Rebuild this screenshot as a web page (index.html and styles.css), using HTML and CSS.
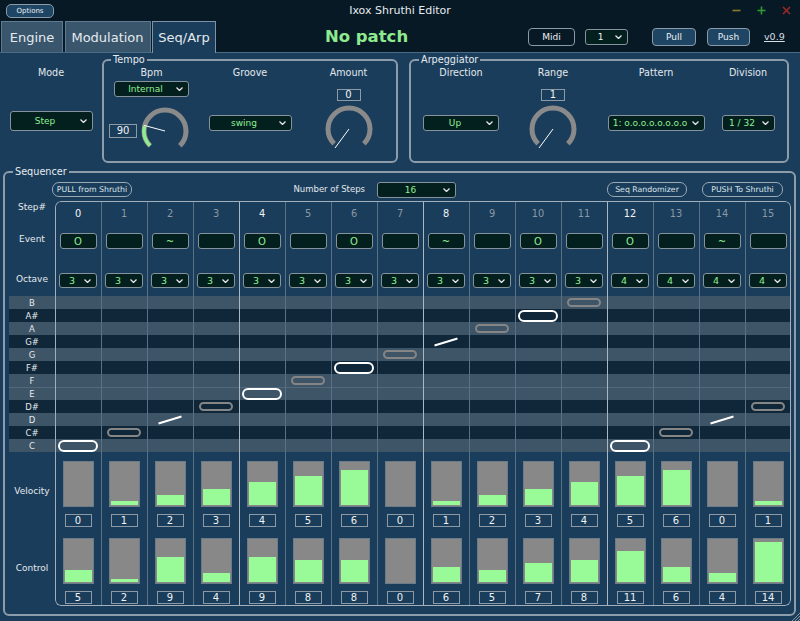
FILE: index.html
```html
<!DOCTYPE html>
<html>
<head>
<meta charset="utf-8">
<title>Ixox Shruthi Editor</title>
<link rel="stylesheet" href="styles.css">
</head>
<body>
<div class="titlebar">
  <div class="btn btn-blue options">Options</div>
  <div class="title">Ixox Shruthi Editor</div>
  <div class="winctl">
    <svg class="wc" viewBox="0 0 9 9"><line x1="0.5" y1="4.5" x2="8.5" y2="4.5" stroke="#8b7c2a" stroke-width="1.6"/></svg>
    <svg class="wc" viewBox="0 0 9 9"><line x1="0.5" y1="4.5" x2="8.5" y2="4.5" stroke="#2f9a2f" stroke-width="1.6"/><line x1="4.5" y1="0.5" x2="4.5" y2="8.5" stroke="#2f9a2f" stroke-width="1.6"/></svg>
    <svg class="wc" viewBox="0 0 9 9"><line x1="1" y1="1" x2="8" y2="8" stroke="#a22a2a" stroke-width="1.4"/><line x1="8" y1="1" x2="1" y2="8" stroke="#a22a2a" stroke-width="1.4"/></svg>
  </div>
</div>

<div class="tabbar">
  <div class="tab t-engine">Engine</div>
  <div class="tab t-mod">Modulation</div>
  <div class="tab t-seq active">Seq/Arp</div>
  <div class="nopatch">No patch</div>
  <div class="btn btn-dark midi">Midi</div>
  <div class="dd dd-white chan"><span>1</span><svg class="chev" viewBox="0 0 7 4"><polyline points="0.5,0.5 3.5,3.5 6.5,0.5"/></svg></div>
  <div class="btn btn-blue pull">Pull</div>
  <div class="btn btn-blue push">Push</div>
  <div class="ver">v0.9</div>
</div>

<div class="main">
  <div class="top">
    <div class="mode">
      <div class="lbl">Mode</div>
      <div class="dd w-step"><span>Step</span><svg class="chev" viewBox="0 0 7 4"><polyline points="0.5,0.5 3.5,3.5 6.5,0.5"/></svg></div>
    </div>

    <fieldset class="group tempo">
      <legend>Tempo</legend>
      <div class="gcols">
        <div class="col c-bpm">
          <div class="lbl">Bpm</div>
          <div class="dd w-internal"><span>Internal</span><svg class="chev" viewBox="0 0 7 4"><polyline points="0.5,0.5 3.5,3.5 6.5,0.5"/></svg></div>
          <div class="knobrow">
            <div class="vbox v-bpm">90</div>
            <svg class="knob" viewBox="0 0 48 48"><path d="M9.15 38.85 A21 21 0 1 1 38.85 38.85" class="ring"/><path d="M9.15 38.85 A21 21 0 0 1 3.54 19.28" class="ring-on"/><line x1="24" y1="24" x2="2.75" y2="18.3" class="needle"/></svg>
          </div>
        </div>
        <div class="col c-groove">
          <div class="lbl">Groove</div>
          <div class="dd w-swing low"><span>swing</span><svg class="chev" viewBox="0 0 7 4"><polyline points="0.5,0.5 3.5,3.5 6.5,0.5"/></svg></div>
        </div>
        <div class="col c-amount">
          <div class="lbl">Amount</div>
          <div class="vbox v-small">0</div>
          <svg class="knob k-small" viewBox="0 0 48 48"><path d="M9.15 38.85 A21 21 0 1 1 38.85 38.85" class="ring"/><line x1="24" y1="24" x2="10" y2="43" class="needle"/></svg>
        </div>
      </div>
    </fieldset>

    <fieldset class="group arp">
      <legend>Arpeggiator</legend>
      <div class="gcols">
        <div class="col c-dir">
          <div class="lbl">Direction</div>
          <div class="dd w-up low"><span>Up</span><svg class="chev" viewBox="0 0 7 4"><polyline points="0.5,0.5 3.5,3.5 6.5,0.5"/></svg></div>
        </div>
        <div class="col c-range">
          <div class="lbl">Range</div>
          <div class="vbox v-small">1</div>
          <svg class="knob k-small" viewBox="0 0 48 48"><path d="M9.15 38.85 A21 21 0 1 1 38.85 38.85" class="ring"/><line x1="24" y1="24" x2="10" y2="43" class="needle"/></svg>
        </div>
        <div class="col c-pat">
          <div class="lbl">Pattern</div>
          <div class="dd w-pat low"><span>1: o.o.o.o.o.o.o.o</span><svg class="chev" viewBox="0 0 7 4"><polyline points="0.5,0.5 3.5,3.5 6.5,0.5"/></svg></div>
        </div>
        <div class="col c-div">
          <div class="lbl">Division</div>
          <div class="dd w-div low"><span>1 / 32</span><svg class="chev" viewBox="0 0 7 4"><polyline points="0.5,0.5 3.5,3.5 6.5,0.5"/></svg></div>
        </div>
      </div>
    </fieldset>
  </div>

  <fieldset class="group seq">
    <legend>Sequencer</legend>
    <div class="seqhead">
      <div class="btn btn-pill b-pull">PULL from Shruthi</div>
      <div class="nsteps">Number of Steps</div>
      <div class="dd w-steps"><span>16</span><svg class="chev" viewBox="0 0 7 4"><polyline points="0.5,0.5 3.5,3.5 6.5,0.5"/></svg></div>
      <div class="btn btn-pill b-rand">Seq Randomizer</div>
      <div class="btn btn-pill b-push">PUSH To Shruthi</div>
    </div>

    <div class="seqgrid">
      <div class="labels">
        <div class="lab lab-step">Step#</div>
        <div class="lab lab-ev">Event</div>
        <div class="lab lab-oct">Octave</div>
        <div class="lab lab-p">B</div>
        <div class="lab lab-p">A#</div>
        <div class="lab lab-p">A</div>
        <div class="lab lab-p">G#</div>
        <div class="lab lab-p">G</div>
        <div class="lab lab-p">F#</div>
        <div class="lab lab-p">F</div>
        <div class="lab lab-p">E</div>
        <div class="lab lab-p">D#</div>
        <div class="lab lab-p">D</div>
        <div class="lab lab-p">C#</div>
        <div class="lab lab-p">C</div>
        <div class="lab">Velocity</div>
        <div class="lab">Control</div>
      </div>

      <div class="steps">
        <div class="num hi">0</div><div class="num">1</div><div class="num">2</div><div class="num">3</div>
        <div class="num hi">4</div><div class="num">5</div><div class="num">6</div><div class="num">7</div>
        <div class="num hi">8</div><div class="num">9</div><div class="num">10</div><div class="num">11</div>
        <div class="num hi">12</div><div class="num">13</div><div class="num">14</div><div class="num">15</div>

        <div class="evc"><div class="ev">O</div></div>
        <div class="evc"><div class="ev"></div></div>
        <div class="evc"><div class="ev">~</div></div>
        <div class="evc"><div class="ev"></div></div>
        <div class="evc"><div class="ev">O</div></div>
        <div class="evc"><div class="ev"></div></div>
        <div class="evc"><div class="ev">O</div></div>
        <div class="evc"><div class="ev"></div></div>
        <div class="evc"><div class="ev">~</div></div>
        <div class="evc"><div class="ev"></div></div>
        <div class="evc"><div class="ev">O</div></div>
        <div class="evc"><div class="ev"></div></div>
        <div class="evc"><div class="ev">O</div></div>
        <div class="evc"><div class="ev"></div></div>
        <div class="evc"><div class="ev">~</div></div>
        <div class="evc"><div class="ev"></div></div>

        <div class="octc"><div class="dd oct"><span>3</span><svg class="chev" viewBox="0 0 7 4"><polyline points="0.5,0.5 3.5,3.5 6.5,0.5"/></svg></div></div>
        <div class="octc"><div class="dd oct"><span>3</span><svg class="chev" viewBox="0 0 7 4"><polyline points="0.5,0.5 3.5,3.5 6.5,0.5"/></svg></div></div>
        <div class="octc"><div class="dd oct"><span>3</span><svg class="chev" viewBox="0 0 7 4"><polyline points="0.5,0.5 3.5,3.5 6.5,0.5"/></svg></div></div>
        <div class="octc"><div class="dd oct"><span>3</span><svg class="chev" viewBox="0 0 7 4"><polyline points="0.5,0.5 3.5,3.5 6.5,0.5"/></svg></div></div>
        <div class="octc"><div class="dd oct"><span>3</span><svg class="chev" viewBox="0 0 7 4"><polyline points="0.5,0.5 3.5,3.5 6.5,0.5"/></svg></div></div>
        <div class="octc"><div class="dd oct"><span>3</span><svg class="chev" viewBox="0 0 7 4"><polyline points="0.5,0.5 3.5,3.5 6.5,0.5"/></svg></div></div>
        <div class="octc"><div class="dd oct"><span>3</span><svg class="chev" viewBox="0 0 7 4"><polyline points="0.5,0.5 3.5,3.5 6.5,0.5"/></svg></div></div>
        <div class="octc"><div class="dd oct"><span>3</span><svg class="chev" viewBox="0 0 7 4"><polyline points="0.5,0.5 3.5,3.5 6.5,0.5"/></svg></div></div>
        <div class="octc"><div class="dd oct"><span>3</span><svg class="chev" viewBox="0 0 7 4"><polyline points="0.5,0.5 3.5,3.5 6.5,0.5"/></svg></div></div>
        <div class="octc"><div class="dd oct"><span>3</span><svg class="chev" viewBox="0 0 7 4"><polyline points="0.5,0.5 3.5,3.5 6.5,0.5"/></svg></div></div>
        <div class="octc"><div class="dd oct"><span>3</span><svg class="chev" viewBox="0 0 7 4"><polyline points="0.5,0.5 3.5,3.5 6.5,0.5"/></svg></div></div>
        <div class="octc"><div class="dd oct"><span>3</span><svg class="chev" viewBox="0 0 7 4"><polyline points="0.5,0.5 3.5,3.5 6.5,0.5"/></svg></div></div>
        <div class="octc"><div class="dd oct"><span>4</span><svg class="chev" viewBox="0 0 7 4"><polyline points="0.5,0.5 3.5,3.5 6.5,0.5"/></svg></div></div>
        <div class="octc"><div class="dd oct"><span>4</span><svg class="chev" viewBox="0 0 7 4"><polyline points="0.5,0.5 3.5,3.5 6.5,0.5"/></svg></div></div>
        <div class="octc"><div class="dd oct"><span>4</span><svg class="chev" viewBox="0 0 7 4"><polyline points="0.5,0.5 3.5,3.5 6.5,0.5"/></svg></div></div>
        <div class="octc"><div class="dd oct"><span>4</span><svg class="chev" viewBox="0 0 7 4"><polyline points="0.5,0.5 3.5,3.5 6.5,0.5"/></svg></div></div>

        <div class="pn" style="grid-area:15/1"><div class="on"></div></div>
        <div class="pn" style="grid-area:14/2"><div class="off"></div></div>
        <div class="pn" style="grid-area:13/3"><div class="tie"></div></div>
        <div class="pn" style="grid-area:12/4"><div class="off"></div></div>
        <div class="pn" style="grid-area:11/5"><div class="on"></div></div>
        <div class="pn" style="grid-area:10/6"><div class="off"></div></div>
        <div class="pn" style="grid-area:9/7"><div class="on"></div></div>
        <div class="pn" style="grid-area:8/8"><div class="off"></div></div>
        <div class="pn" style="grid-area:7/9"><div class="tie"></div></div>
        <div class="pn" style="grid-area:6/10"><div class="off"></div></div>
        <div class="pn" style="grid-area:5/11"><div class="on"></div></div>
        <div class="pn" style="grid-area:4/12"><div class="off"></div></div>
        <div class="pn" style="grid-area:15/13"><div class="on"></div></div>
        <div class="pn" style="grid-area:14/14"><div class="off"></div></div>
        <div class="pn" style="grid-area:13/15"><div class="tie"></div></div>
        <div class="pn" style="grid-area:12/16"><div class="off"></div></div>

        <div class="slot vel"><div class="bar"><div class="fill" style="height:0px"></div></div><div class="vbox val">0</div></div>
        <div class="slot vel"><div class="bar"><div class="fill" style="height:4px"></div></div><div class="vbox val">1</div></div>
        <div class="slot vel"><div class="bar"><div class="fill" style="height:10px"></div></div><div class="vbox val">2</div></div>
        <div class="slot vel"><div class="bar"><div class="fill" style="height:16px"></div></div><div class="vbox val">3</div></div>
        <div class="slot vel"><div class="bar"><div class="fill" style="height:23px"></div></div><div class="vbox val">4</div></div>
        <div class="slot vel"><div class="bar"><div class="fill" style="height:29px"></div></div><div class="vbox val">5</div></div>
        <div class="slot vel"><div class="bar"><div class="fill" style="height:35px"></div></div><div class="vbox val">6</div></div>
        <div class="slot vel"><div class="bar"><div class="fill" style="height:0px"></div></div><div class="vbox val">0</div></div>
        <div class="slot vel"><div class="bar"><div class="fill" style="height:4px"></div></div><div class="vbox val">1</div></div>
        <div class="slot vel"><div class="bar"><div class="fill" style="height:10px"></div></div><div class="vbox val">2</div></div>
        <div class="slot vel"><div class="bar"><div class="fill" style="height:16px"></div></div><div class="vbox val">3</div></div>
        <div class="slot vel"><div class="bar"><div class="fill" style="height:23px"></div></div><div class="vbox val">4</div></div>
        <div class="slot vel"><div class="bar"><div class="fill" style="height:29px"></div></div><div class="vbox val">5</div></div>
        <div class="slot vel"><div class="bar"><div class="fill" style="height:35px"></div></div><div class="vbox val">6</div></div>
        <div class="slot vel"><div class="bar"><div class="fill" style="height:0px"></div></div><div class="vbox val">0</div></div>
        <div class="slot vel"><div class="bar"><div class="fill" style="height:4px"></div></div><div class="vbox val">1</div></div>

        <div class="slot ctl"><div class="bar"><div class="fill" style="height:12.4px"></div></div><div class="vbox val">5</div></div>
        <div class="slot ctl"><div class="bar"><div class="fill" style="height:3.1px"></div></div><div class="vbox val">2</div></div>
        <div class="slot ctl"><div class="bar"><div class="fill" style="height:24.8px"></div></div><div class="vbox val">9</div></div>
        <div class="slot ctl"><div class="bar"><div class="fill" style="height:9.3px"></div></div><div class="vbox val">4</div></div>
        <div class="slot ctl"><div class="bar"><div class="fill" style="height:24.8px"></div></div><div class="vbox val">9</div></div>
        <div class="slot ctl"><div class="bar"><div class="fill" style="height:21.7px"></div></div><div class="vbox val">8</div></div>
        <div class="slot ctl"><div class="bar"><div class="fill" style="height:21.7px"></div></div><div class="vbox val">8</div></div>
        <div class="slot ctl"><div class="bar"><div class="fill" style="height:0px"></div></div><div class="vbox val">0</div></div>
        <div class="slot ctl"><div class="bar"><div class="fill" style="height:15.5px"></div></div><div class="vbox val">6</div></div>
        <div class="slot ctl"><div class="bar"><div class="fill" style="height:12.4px"></div></div><div class="vbox val">5</div></div>
        <div class="slot ctl"><div class="bar"><div class="fill" style="height:18.6px"></div></div><div class="vbox val">7</div></div>
        <div class="slot ctl"><div class="bar"><div class="fill" style="height:21.7px"></div></div><div class="vbox val">8</div></div>
        <div class="slot ctl"><div class="bar"><div class="fill" style="height:31px"></div></div><div class="vbox val">11</div></div>
        <div class="slot ctl"><div class="bar"><div class="fill" style="height:15.5px"></div></div><div class="vbox val">6</div></div>
        <div class="slot ctl"><div class="bar"><div class="fill" style="height:9.3px"></div></div><div class="vbox val">4</div></div>
        <div class="slot ctl"><div class="bar"><div class="fill" style="height:40.3px"></div></div><div class="vbox val">14</div></div>
      </div>
    </div>
  </fieldset>
</div>

<svg class="grip" viewBox="0 0 10 10"><line x1="2" y1="10" x2="10" y2="2"/><line x1="5" y1="10" x2="10" y2="5"/><line x1="8" y1="10" x2="10" y2="8"/></svg>
</body>
</html>
```

FILE: styles.css
```css
* { box-sizing: border-box; }
html, body { margin: 0; padding: 0; }
body {
  width: 800px;
  height: 621px;
  overflow: hidden;
  position: relative;
  background: #081926;
  font-family: "DejaVu Sans", Verdana, sans-serif;
  color: #e2e8ec;
}

/* ---------- title bar ---------- */
.titlebar {
  height: 21px;
  display: grid;
  grid-template-columns: 1fr auto 1fr;
  align-items: center;
}
.title { font-size: 11px; color: #e6ebef; }
.winctl {
  justify-self: end;
  display: flex;
  align-items: center;
  gap: 16px;
  margin-right: 9px;
}
.wc { width: 9px; height: 9px; display: block; }

.btn {
  display: flex;
  align-items: center;
  justify-content: center;
  border: 1px solid #8a9aa8;
  border-radius: 4px;
  color: #e8eef2;
  white-space: nowrap;
}
.btn-blue { background: #1f4564; }
.btn-dark { background: #081926; }
.btn-pill { background: transparent; border-color: #9aa8b4; border-radius: 7px; font-size: 7.8px; height: 15px; margin-top: 4px; color: #dde4ea; }

.options {
  justify-self: start;
  margin-left: 6px;
  width: 48px;
  height: 14px;
  font-size: 7px;
  border-radius: 5px;
}

/* ---------- tab bar ---------- */
.tabbar {
  height: 31px;
  display: flex;
  align-items: stretch;
  padding-left: 1px;
}
.tab {
  font-size: 13px;
  display: flex;
  align-items: center;
  justify-content: center;
  background: #3a566c;
  border: 1px solid #5f7b92;
  border-bottom: none;
  color: #e4eaee;
  margin-right: 1.5px;
}
.t-engine { width: 62px; }
.t-mod { width: 86px; }
.t-seq { width: 64px; }
.tab.active {
  background: #1a3d5b;
  border-color: #7f93a4;
  position: relative;
  z-index: 1;
  margin-bottom: -1px;
}
.nopatch {
  width: 200px;
  margin-left: 49px;
  align-self: center;
  text-align: center;
  font-weight: bold;
  font-size: 16.5px;
  color: #8fe98f;
}
.midi, .chan, .pull, .push { align-self: center; height: 18px; font-size: 9px; }
.midi { margin-left: 61.5px; width: 47px; }
.chan { margin-left: 10px; width: 43px; }
.pull { margin-left: 24px; width: 44px; }
.push { margin-left: 11px; width: 43px; }
.ver {
  align-self: center;
  margin-left: 14px;
  font-size: 9.5px;
  text-decoration: underline;
  color: #d8dee4;
}

/* ---------- dropdowns ---------- */
.dd {
  display: flex;
  align-items: center;
  background: #03201f;
  border: 1px solid #87939c;
  border-radius: 3px;
  color: #90ee90;
  font-size: 9px;
  padding-right: 5px;
  height: 16px;
  white-space: nowrap;
}
.dd span { flex: 1; text-align: center; }
.dd-white { color: #f0f0f0; }
.chev {
  width: 7px;
  height: 4px;
  display: block;
  fill: none;
  stroke: #e6e6e6;
  stroke-width: 1.3;
}
.w-step { width: 83px; height: 20px; margin-top: 32px; }
.w-internal { width: 75px; margin-top: 2px; }
.w-swing { width: 83px; }
.w-up { width: 76px; }
.w-pat { width: 97px; }
.w-div { width: 53px; }
.w-steps { width: 79px; margin-left: 12px; margin-top: 4px; }
.low { margin-top: 36px; }

/* ---------- main panel ---------- */
.main {
  height: 569px;
  background: #1a3d5b;
  border-top: 1px solid #4a6a86;
}
.top {
  display: flex;
  align-items: flex-start;
  padding-top: 1px;
}
.lbl {
  font-size: 9.6px;
  line-height: 12px;
  margin-top: 1px;
  color: #e2e8ec;
  white-space: nowrap;
}
.mode {
  width: 102px;
  display: flex;
  flex-direction: column;
  align-items: center;
}
.mode .lbl { margin-top: 13px; }

.group {
  border: 2px solid #8d9caa;
  border-radius: 6px;
  margin: 0;
  padding: 0;
  min-width: 0;
}
.group legend {
  font-size: 9.7px;
  line-height: 12px;
  padding: 0 2px;
  color: #e6ebef;
}
.tempo { width: 296px; }
.tempo legend { margin-left: 7px; }
.arp { width: 380px; margin-left: 11px; }
.arp legend { margin-left: 8px; }

.gcols { display: flex; height: 95px; }
.col { display: flex; flex-direction: column; align-items: center; }
.c-bpm { width: 95px; }
.c-groove { width: 102px; }
.c-amount { width: 95px; }
.c-dir { width: 100px; }
.c-range { width: 84px; }
.c-pat { width: 122px; }
.c-div { width: 62px; }

.knobrow {
  align-self: stretch;
  display: flex;
  align-items: center;
  gap: 4px;
  padding-left: 5px;
  margin-top: 9.5px;
}
.vbox {
  display: flex;
  align-items: center;
  justify-content: center;
  border: 1px solid #8d9aa6;
  color: #f0f2f4;
  font-size: 10px;
}
.v-bpm { width: 28px; height: 14px; }
.v-small { width: 24px; height: 12.5px; margin-top: 9.5px; }
.knob { width: 48px; height: 48px; display: block; }
.k-small { margin-top: 3.5px; }
.ring { fill: none; stroke: #8a8a8a; stroke-width: 5; }
.ring-on { fill: none; stroke: #90ee90; stroke-width: 3.5; }
.needle { stroke: #ffffff; stroke-width: 1; }

/* ---------- sequencer ---------- */
.seq {
  width: 793px;
  margin: 3px 0 0 3px;
  padding: 0 0 8px 4px;
}
.seq legend { margin-left: 4px; }
.seqhead {
  display: flex;
  align-items: flex-start;
  height: 23px;
}
.b-pull { width: 80px; margin-left: 43px; }
.nsteps {
  width: 84px;
  margin-left: 149px;
  margin-top: 4px;
  line-height: 15px;
  text-align: right;
  font-size: 8.5px;
  white-space: nowrap;
}
.b-rand { width: 80px; margin-left: 151px; }
.b-push { width: 81px; margin-left: 15px; }

.seqgrid { display: flex; }

.labels, .steps {
  display: grid;
  grid-template-rows: 25px 30px 40px repeat(12, 13px) 77px 77px;
}
.labels {
  width: 46px;
  background:
    linear-gradient(to bottom,
      #3e5467 0 13px, #0f2739 13px 26px, #3e5467 26px 39px, #0f2739 39px 52px,
      #3e5467 52px 65px, #0f2739 65px 78px, #3e5467 78px 91px, #53687a 91px 92px,
      #3e5467 92px 104px, #0f2739 104px 117px, #3e5467 117px 130px, #0f2739 130px 143px,
      #3e5467 143px 156px) 0 95px / 100% 156px no-repeat;
}
.steps {
  width: 736px;
  grid-template-columns: repeat(16, 46px);
  border-radius: 6px;
  box-shadow: inset 0 0 0 1px #a2aeb9;
  background:
    repeating-linear-gradient(to right, #aab6c0 0 1px, transparent 1px 184px) 184px 0 / 552px 100% no-repeat,
    repeating-linear-gradient(to right, #5a7084 0 1px, transparent 1px 46px) 46px 0 / 690px 100% no-repeat,
    linear-gradient(to bottom,
      #3e5467 0 13px, #0f2739 13px 26px, #3e5467 26px 39px, #0f2739 39px 52px,
      #3e5467 52px 65px, #0f2739 65px 78px, #3e5467 78px 91px, #53687a 91px 92px,
      #3e5467 92px 104px, #0f2739 104px 117px, #3e5467 117px 130px, #0f2739 130px 143px,
      #3e5467 143px 156px) 0 95px / 100% 156px no-repeat;
}

.lab {
  display: flex;
  align-items: center;
  justify-content: center;
  font-size: 9px;
  line-height: 12px;
  color: #e4e9ed;
}
.lab-step { align-items: flex-start; }
.lab-ev { align-items: flex-start; padding-top: 7px; }
.lab-oct { align-items: flex-start; padding-top: 17px; }
.lab-p { font-size: 8.5px; }

.num {
  grid-row: 1;
  display: flex;
  align-items: center;
  justify-content: center;
  font-size: 9.8px;
  color: #8a99a6;
}
.num.hi { color: #f2f4f6; }

.evc {
  grid-row: 2;
  display: flex;
  align-items: center;
  justify-content: center;
}
.ev {
  width: 37px;
  height: 16px;
  background: #03201f;
  border: 1px solid #87939c;
  border-radius: 3px;
  color: #90ee90;
  font-size: 10px;
  display: flex;
  align-items: center;
  justify-content: center;
}
.octc {
  grid-row: 3;
  display: flex;
  justify-content: center;
  align-items: flex-start;
  padding-top: 17px;
}
.oct { width: 38px; height: 15px; font-size: 9.5px; }

.pn {
  display: flex;
  align-items: center;
  justify-content: center;
}
.on {
  width: 40px;
  height: 12px;
  border: 2px solid #ffffff;
  border-radius: 6px;
}
.off {
  width: 34px;
  height: 9px;
  border: 2px solid #858585;
  border-radius: 5px;
}
.tie {
  width: 24px;
  height: 2px;
  background: #ffffff;
  transform: rotate(-17deg);
}

.slot {
  display: flex;
  flex-direction: column;
  align-items: center;
  padding-top: 9px;
}
.vel { grid-row: 16; }
.ctl { grid-row: 17; }
.bar {
  width: 31px;
  height: 46px;
  background: #888888;
  border: 1px solid #6c7b88;
  padding: 1px;
  display: flex;
  flex-direction: column;
  justify-content: flex-end;
}
.fill { background: #98fb98; }
.val { width: 27px; height: 13px; margin-top: 7px; }

.grip {
  position: absolute;
  right: 0;
  bottom: 0;
  width: 10px;
  height: 10px;
  stroke: #8a96a0;
  stroke-width: 1;
}
```
